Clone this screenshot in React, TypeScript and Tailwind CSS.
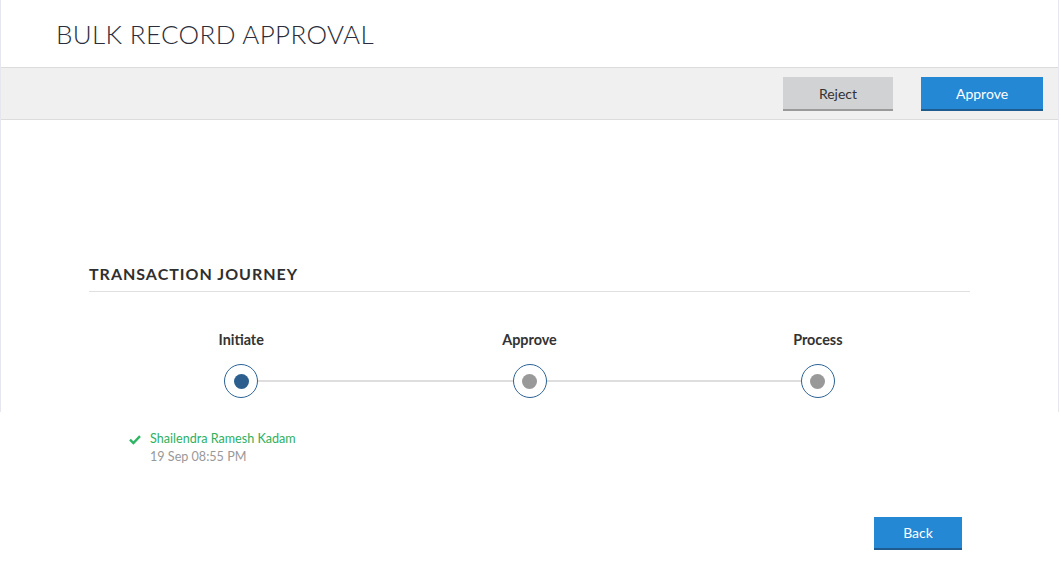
import React from 'react';

const STEPS = [
  { label: 'Initiate', done: true },
  { label: 'Approve', done: false },
  { label: 'Process', done: false },
];

export default function App() {
  return (
    <div className="min-h-screen bg-white text-[#333]" style={{ fontFamily: 'Lato, "Open Sans", sans-serif' }}>
      {/* Main panel */}
      <div className="w-[1059px] border-x border-[#e6e6ee] pb-[14px]">
        <div className="h-[67px] pt-[21px] pl-[55px]">
          <h1 className="text-[26px] leading-[26px] font-light text-[#2b2e3a] tracking-[0.35px]">BULK RECORD APPROVAL</h1>
        </div>

        {/* Toolbar */}
        <div className="h-[53px] bg-[#f0f0f0] border-y border-[#dcdcdc] flex items-start pt-[9px] justify-end gap-[28px] pr-[15px]">
          <button className="w-[110px] h-[34px] bg-[#d1d2d4] border-b-2 border-[#9a9a9a] text-[14px] text-[#333]">Reject</button>
          <button className="w-[122px] h-[34px] bg-[#2488d4] border-b-2 border-[#1e5b8f] text-[14px] text-white">Approve</button>
        </div>

        {/* Transaction journey */}
        <div className="ml-[88px] w-[881px] mt-[145px]">
          <h2 className="text-[16px] leading-[18px] font-bold tracking-[1px] text-[#2f2f2f] pb-[8px] border-b border-[#e0e0e0]">
            TRANSACTION JOURNEY
          </h2>
          <div className="px-[8px] mt-[39px] grid grid-cols-3">
            {STEPS.map((s, i) => (
              <div key={s.label} className="flex flex-col items-center">
                <p className="text-[14.4px] leading-[17px] font-bold text-[#333]">{s.label}</p>
                <div className="w-full flex items-center mt-[16px]">
                  <div className={i === 0 ? 'flex-1' : 'flex-1 h-[2px] bg-[#dedede]'} />
                  <div className="w-[34px] h-[34px] rounded-full border border-[#2c6396] flex items-center justify-center bg-white">
                    <div className={s.done ? 'w-[15px] h-[15px] rounded-full bg-[#2c5f8e]' : 'w-[15px] h-[15px] rounded-full bg-[#999]'} />
                  </div>
                  <div className={i === STEPS.length - 1 ? 'flex-1' : 'flex-1 h-[2px] bg-[#dedede]'} />
                </div>
              </div>
            ))}
          </div>
        </div>
      </div>

      {/* Approver detail */}
      <div className="ml-[129px] mt-[18px] flex gap-[9px]">
        <svg width="12" height="18" viewBox="0 0 12 18" className="shrink-0">
          <path d="M1 9.6 L4.4 13 L11 6.2" fill="none" stroke="#2eb563" strokeWidth="2.4" />
        </svg>
        <div className="text-[12.6px] leading-[18px]">
          <p className="text-[#2eb05f]">Shailendra Ramesh Kadam</p>
          <p className="text-[#999]">19 Sep 08:55 PM</p>
        </div>
      </div>

      <div className="ml-[874px] mt-[51px]">
        <button className="w-[88px] h-[33px] bg-[#2488d4] border-b-2 border-[#1e5b8f] text-[14px] text-white">Back</button>
      </div>
    </div>
  );
}
